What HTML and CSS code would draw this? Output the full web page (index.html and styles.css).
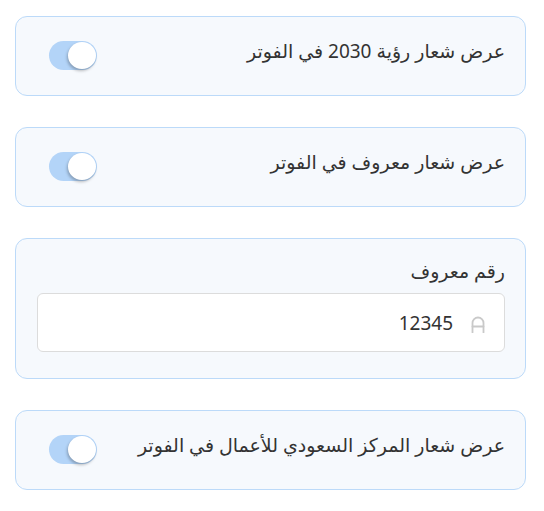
FILE: index.html
```html
<!DOCTYPE html>
<html lang="ar" dir="rtl">
<head>
<meta charset="utf-8">
<link rel="stylesheet" href="styles.css">
</head>
<body>
<div class="page">
  <div class="card">
    <div class="row">
      <span class="label">عرض شعار رؤية 2030 في الفوتر</span>
      <span class="switch"><span class="thumb"></span></span>
    </div>
  </div>
  <div class="card">
    <div class="row">
      <span class="label">عرض شعار معروف في الفوتر</span>
      <span class="switch"><span class="thumb"></span></span>
    </div>
  </div>
  <div class="card card-field">
    <div class="field-label">رقم معروف</div>
    <div class="input">
      <svg class="input-icon" width="14" height="17" viewBox="0 0 14 17" fill="none" stroke="#c9c9c9" stroke-width="1.8" stroke-linecap="round">
        <path d="M1.5 16.5 V7 A5.5 5.5 0 0 1 12.5 7 V16.5"/>
        <path d="M1.5 10.5 H12.5"/>
      </svg>
      <span class="input-value">12345</span>
    </div>
  </div>
  <div class="card">
    <div class="row">
      <span class="label">عرض شعار المركز السعودي للأعمال في الفوتر</span>
      <span class="switch"><span class="thumb"></span></span>
    </div>
  </div>
</div>
</body>
</html>
```
FILE: styles.css
```css
* { box-sizing: border-box; }
html, body { margin: 0; padding: 0; background: #ffffff; }
body {
  font-family: "Noto Sans", "Open Sans", "DejaVu Sans", sans-serif;
  color: #333333;
}
.page {
  padding: 16px 18px 0 15px;
  display: flex;
  flex-direction: column;
  gap: 31px;
}
.card {
  background: #f6f9fd;
  border: 1px solid #bcdaf9;
  border-radius: 12px;
  padding: 22px 20px 25px 33px;
  height: 80px;
}
.row {
  display: flex;
  justify-content: space-between;
  align-items: flex-start;
}
.label {
  font-size: 19px;
  line-height: 24px;
}
.switch {
  position: relative;
  width: 48px;
  height: 29px;
  border-radius: 15px;
  background: #b3d4f8;
  margin-top: 2px;
}
.thumb {
  position: absolute;
  top: 1px;
  left: 19px;
  width: 28px;
  height: 27px;
  border-radius: 50%;
  background: #ffffff;
  box-shadow: -1px 2px 3px rgba(0, 0, 0, 0.25);
}
.card-field {
  height: 141px;
  padding: 19px 20px 0 21px;
}
.field-label {
  font-size: 19px;
  line-height: 26px;
  margin-bottom: 9px;
}
.input {
  height: 59px;
  background: #ffffff;
  border: 1px solid #dcdcdc;
  border-radius: 6px;
  display: flex;
  align-items: center;
  padding: 0 19px 0 0;
  gap: 18px;
}
.input-icon {
  display: block;
  margin-top: 3px;
}
.input-value {
  font-size: 19px;
}
```
